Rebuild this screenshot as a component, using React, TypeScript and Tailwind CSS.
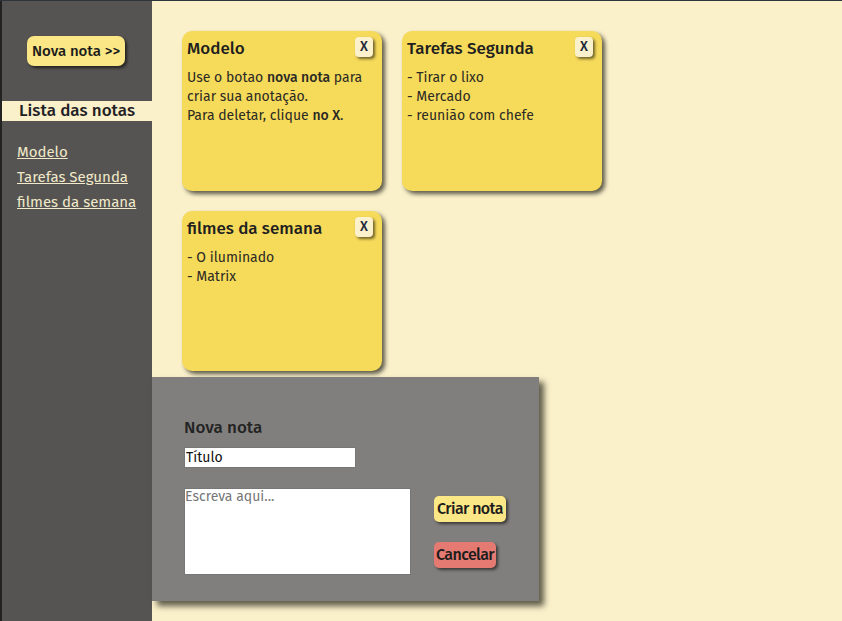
import React from "react";

const font = { fontFamily: '"Fira Sans", "Noto Sans", "Open Sans", sans-serif' };

function XBtn() {
  return (
    <button className="absolute right-[9px] top-[6px] flex h-[20px] w-[18px] items-center justify-center rounded-[4px] bg-[#fbf1cc] text-[14px] font-medium leading-none text-[#1e2a3a] shadow-[2px_2px_3px_rgba(0,0,0,0.55)]">
      X
    </button>
  );
}

function Note({ title, children }: { title: string; children: React.ReactNode }) {
  return (
    <div className="relative h-[160px] w-[200px] rounded-[10px] bg-[#f6da5a] px-[5px] pt-[6px] text-[#2b2a24] shadow-[3px_3px_4px_rgba(40,40,30,0.75)]">
      <div className="text-[17px] font-medium leading-[23px] text-[#1f1f1f]">{title}</div>
      <XBtn />
      <div className="mt-[8px] text-[14px] leading-[19px]">{children}</div>
    </div>
  );
}

export default function App() {
  return (
    <div style={font} className="relative flex h-[621px] w-[842px] overflow-hidden border-t border-[#2e3438] bg-[#faf0ca]">
      <aside className="flex h-full w-[152px] shrink-0 flex-col border-l-2 border-[#222222] bg-[#555452]">
        <div className="flex justify-center pt-[35px]">
          <button className="ml-[-2px] h-[30px] rounded-[7px] bg-[#fce786] px-[5px] text-[15px] font-medium text-[#1b1b1b] shadow-[2px_2px_3px_rgba(0,0,0,0.6)]">
            Nova nota &gt;&gt;
          </button>
        </div>
        <div className="mt-[35px] h-[20px] bg-[#faf0ca] text-center text-[17px] font-medium leading-[20px] text-[#1f2124]">
          Lista das notas
        </div>
        <nav className="mt-[21px] flex flex-col gap-[5px] pl-[15px] text-[15px] leading-[20px] text-[#f1e9c9]">
          <a className="underline">Modelo</a>
          <a className="underline">Tarefas Segunda</a>
          <a className="underline">filmes da semana</a>
        </nav>
      </aside>
      <main className="flex-1 pl-[30px] pt-[30px]">
        <div className="grid w-[420px] grid-cols-2 gap-[20px]">
          <Note title="Modelo">
            Use o botao <b className="font-medium">nova nota</b> para criar sua anotação.
            <br />
            Para deletar, clique <b className="font-medium">no X</b>.
          </Note>
          <Note title="Tarefas Segunda">
            - Tirar o lixo
            <br />- Mercado
            <br />- reunião com chefe
          </Note>
          <Note title="filmes da semana">
            - O iluminado
            <br />- Matrix
          </Note>
        </div>
      </main>
      <div className="absolute left-[152px] top-[376px] h-[224px] w-[387px] bg-[#817f7d] shadow-[5px_5px_6px_rgba(30,30,20,0.7)]">
        <div className="pl-[32px] pt-[40px]">
          <div className="text-[17px] font-medium leading-[22px] text-[#232323]">Nova nota</div>
          <input
            className="mt-[8px] block h-[21px] w-[172px] border border-[#777] bg-white px-[1px] text-[14px] text-[#111] outline-none"
            defaultValue="Título"
          />
          <div className="mt-[20px] flex items-start">
            <textarea
              className="block h-[87px] w-[227px] resize-none border border-[#777] bg-white p-0 text-[14px] leading-[16px] text-[#111] outline-none placeholder:text-[#777]"
              placeholder="Escreva aqui..."
            />
            <div className="ml-[23px] mt-[8px] flex flex-col items-start gap-[20px]">
              <button className="h-[26px] w-[72px] rounded-[5px] bg-[#fce786] text-center text-[16px] font-medium leading-none tracking-[-0.6px] text-[#1c1c1c] shadow-[2px_2px_3px_rgba(0,0,0,0.55)]">
                Criar nota
              </button>
              <button className="h-[26px] w-[62px] rounded-[5px] bg-[#e57a72] text-center text-[16px] font-medium leading-none tracking-[-0.6px] text-[#1c1c1c] shadow-[2px_2px_3px_rgba(0,0,0,0.55)]">
                Cancelar
              </button>
            </div>
          </div>
        </div>
      </div>
    </div>
  );
}
